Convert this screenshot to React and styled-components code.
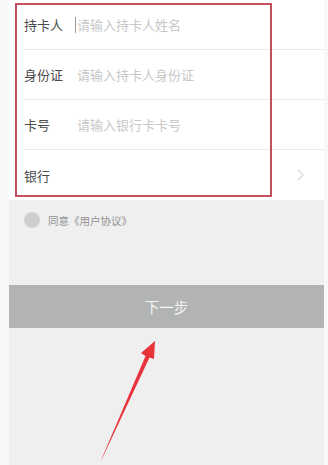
import styled, { createGlobalStyle } from "styled-components"

const GlobalStyle = createGlobalStyle`
	html, body {
		margin: 0;
		padding: 0;
		background: #f7f8fa;
	}
	body {
		font-family: "Noto Sans CJK SC", "Noto Sans", sans-serif;
	}
`

const fields = [
	{ label: "持卡人", placeholder: "请输入持卡人姓名", cursor: true },
	{ label: "身份证", placeholder: "请输入持卡人身份证" },
	{ label: "卡号", placeholder: "请输入银行卡卡号" },
	{ label: "银行", arrow: true },
]

export default function App() {
	return (
		<>
			<GlobalStyle />
			<Page>
				<Screen>
					<Form>
						{fields.map((f, i) => (
							<Row key={f.label} $last={i === fields.length - 1}>
								<Label>{f.label}</Label>
								{f.placeholder ? (
									<Placeholder $cursor={f.cursor}>{f.placeholder}</Placeholder>
								) : (
									<Spacer />
								)}
								{f.arrow ? (
									<Chevron viewBox="0 0 8 14">
										<path d="M1 1l6 6-6 6" fill="none" stroke="#d0d0d0" strokeWidth="1.2" />
									</Chevron>
								) : null}
							</Row>
						))}
					</Form>
					<Agreement>
						<Radio />
						<AgreeText>同意《用户协议》</AgreeText>
					</Agreement>
					<NextButton>下一步</NextButton>
					<Rest />
				</Screen>
				<Highlight />
				<Arrow viewBox="0 0 328 465">
					<path d="M101 461 L102 458 L145.5 356 L141 353 L155 341 L154 359 L149.5 357.5 Z" fill="#e8333a" />
				</Arrow>
			</Page>
		</>
	)
}

const Page = styled.div`
	position: relative;
	width: 328px;
	height: 465px;
	overflow: hidden;
	padding: 0 4px 0 9px;
	box-sizing: border-box;
	background: #f7f8fa;
`

const Screen = styled.div`
	display: flex;
	flex-direction: column;
	height: 100%;
	background: #efeff0;
`

const Form = styled.section`
	background: #fff;
	display: flex;
	flex-direction: column;
`

const Row = styled.div`
	height: 50px;
	display: flex;
	align-items: center;
	margin-left: 15px;
	padding-right: 20px;
	border-bottom: ${(p) => (p.$last ? "none" : "1px solid #ececec")};
	box-sizing: border-box;
`

const Label = styled.span`
	width: 51px;
	font-size: 13px;
	color: #4a4a4a;
	flex-shrink: 0;
`

const Placeholder = styled.span`
	font-size: 13px;
	color: #c8c8c8;
	padding-left: 1px;
	border-left: ${(p) => (p.$cursor ? "1px solid #999" : "1px solid transparent")};
	line-height: 16px;
`

const Spacer = styled.span`
	flex: 1;
`

const Chevron = styled.svg`
	width: 7px;
	height: 12px;
`

const Agreement = styled.div`
	display: flex;
	align-items: center;
	gap: 8px;
	padding: 12px 0 0 15px;
	height: 16px;
`

const Radio = styled.span`
	width: 16px;
	height: 16px;
	border-radius: 50%;
	background: #cfcfd1;
`

const AgreeText = styled.span`
	font-size: 10.5px;
	color: #929292;
`

const NextButton = styled.div`
	margin-top: 57px;
	height: 43px;
	background: #b2b3b3;
	color: #f4f4f4;
	font-size: 14.5px;
	display: flex;
	align-items: center;
	justify-content: center;
`

const Rest = styled.div`
	flex: 1;
`

const Highlight = styled.div`
	position: absolute;
	left: 15px;
	top: 3px;
	width: 257px;
	height: 194px;
	border: 2px solid #c6505c;
	box-sizing: border-box;
	pointer-events: none;
`

const Arrow = styled.svg`
	position: absolute;
	left: 0;
	top: 0;
	width: 328px;
	height: 465px;
	pointer-events: none;
`
